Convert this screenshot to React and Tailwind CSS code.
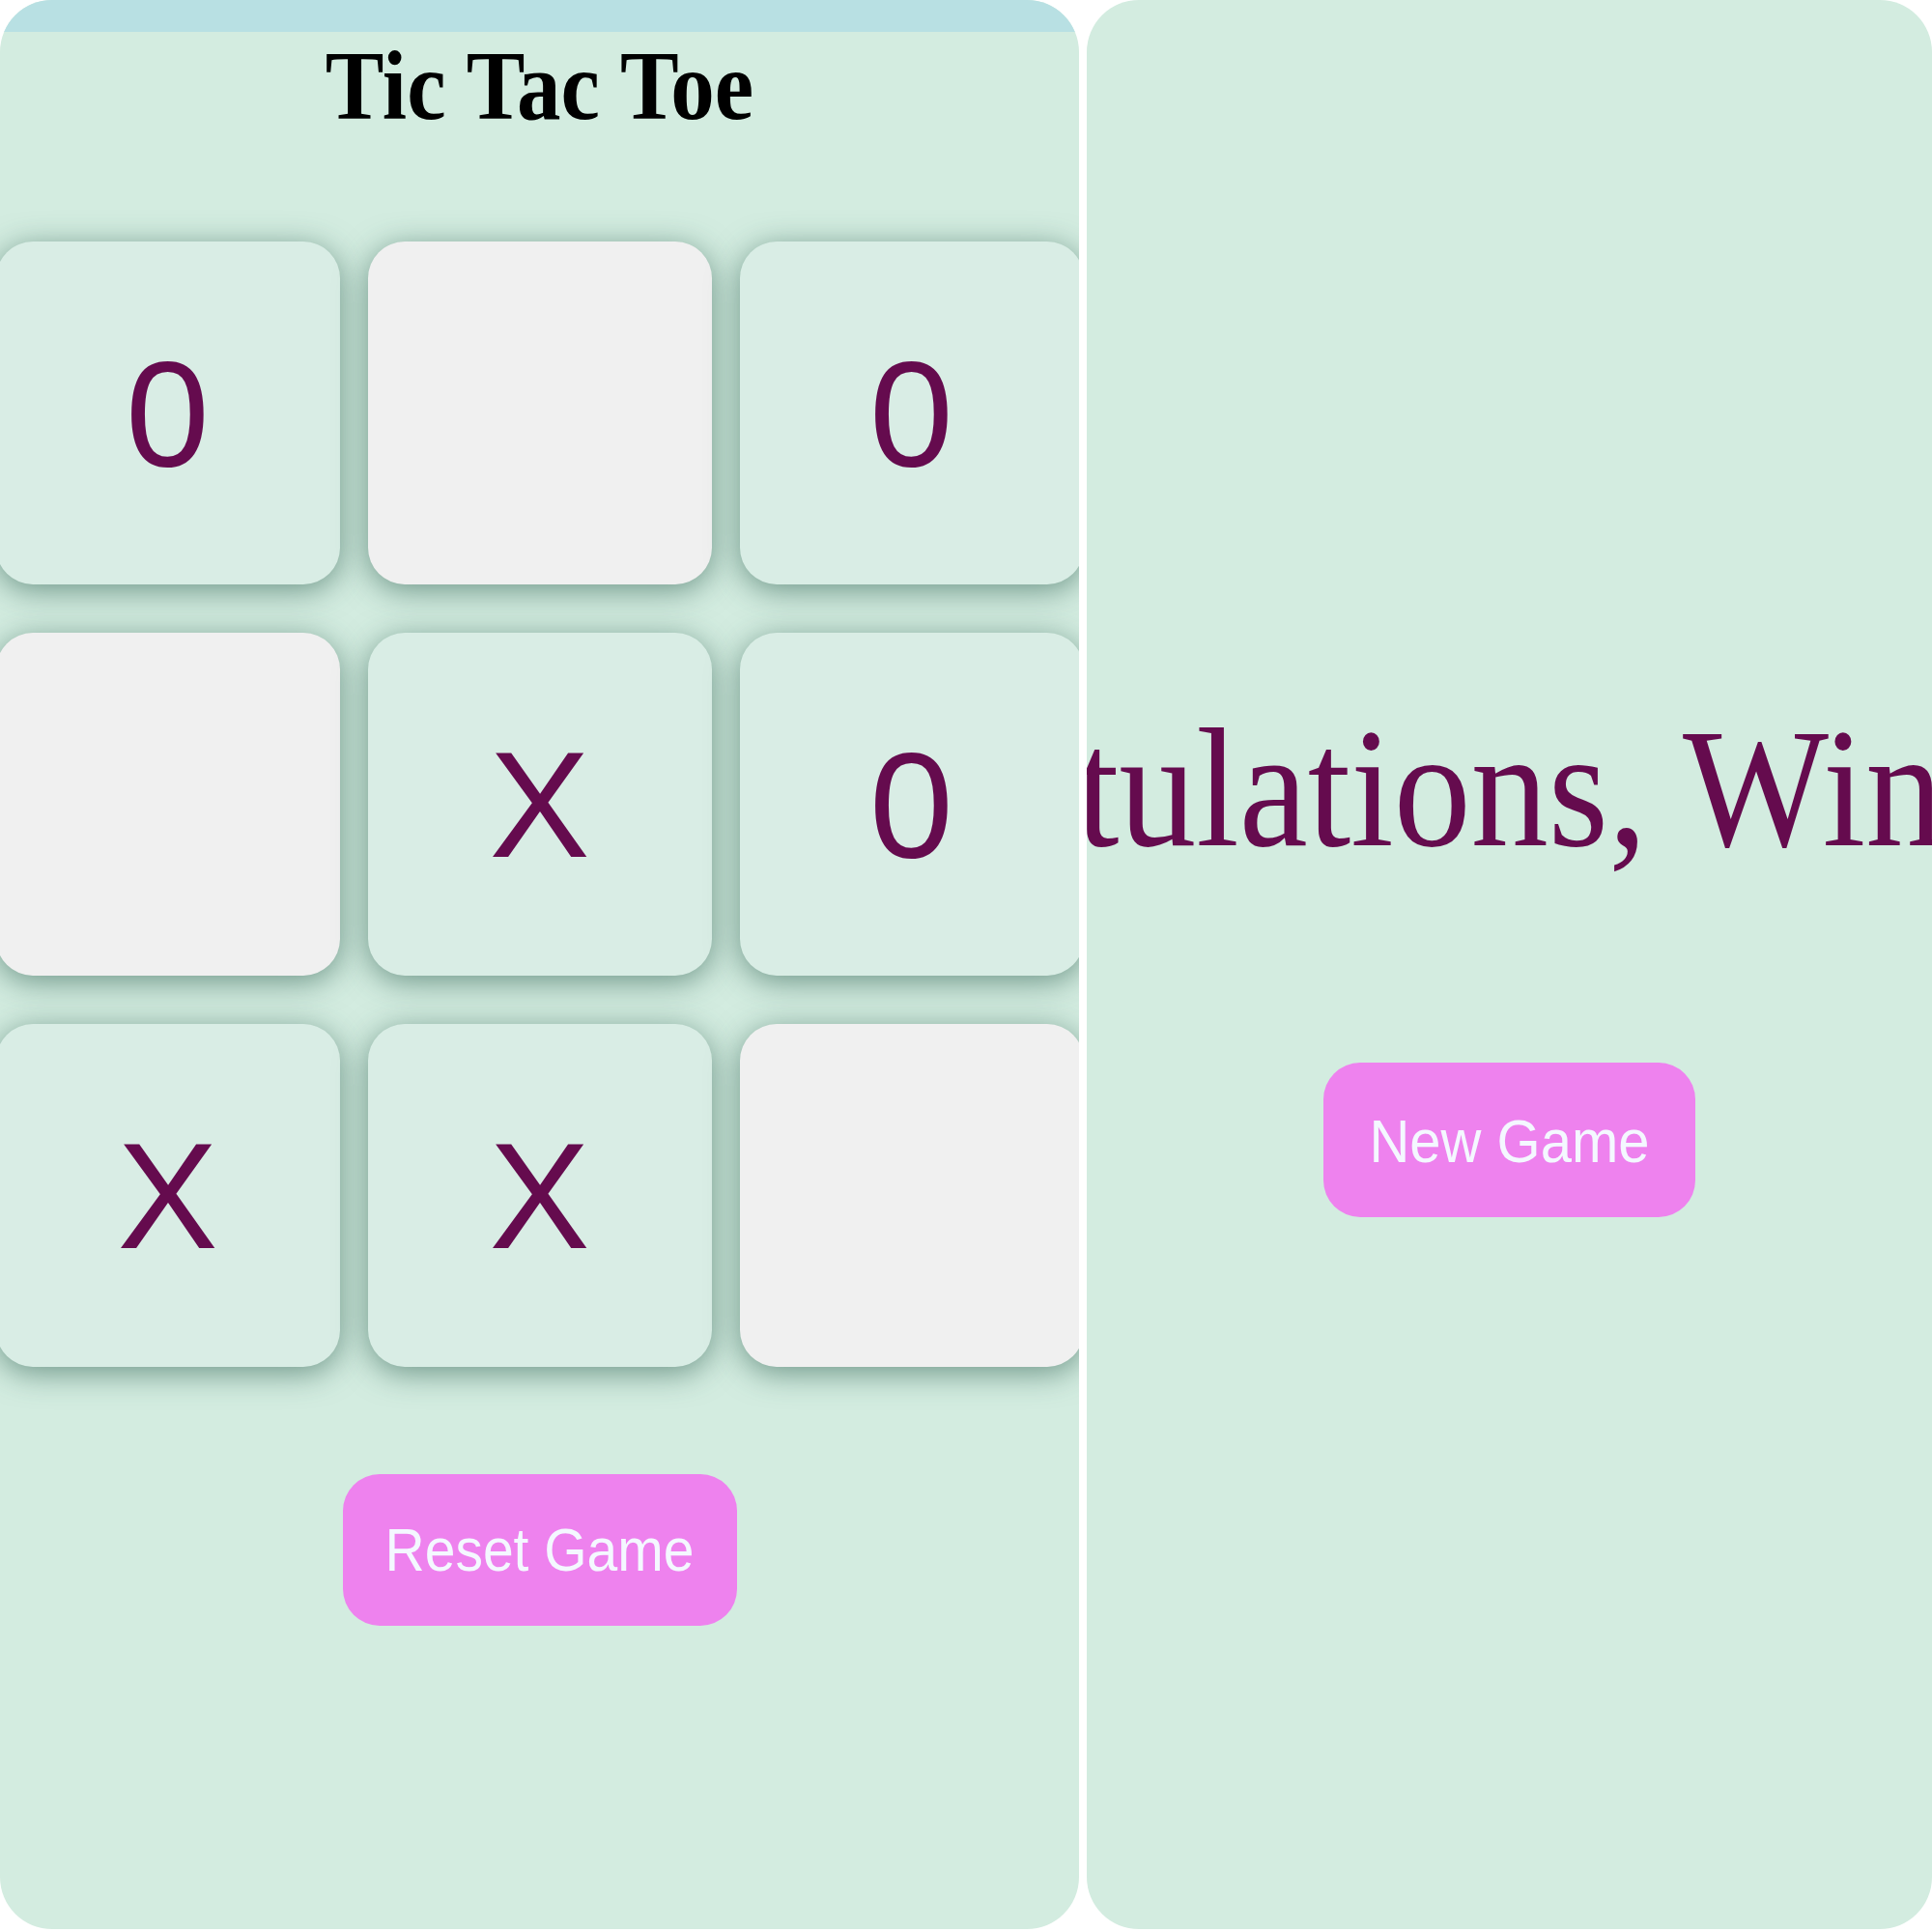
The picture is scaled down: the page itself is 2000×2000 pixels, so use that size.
const board = ["0", "", "0", "", "X", "0", "X", "X", ""];

const Cell = ({ value }) => {
  return (
    <div
      className={`h-[355px] rounded-[38px] flex items-center justify-center text-[156px] leading-none text-[#650b4e] shadow-[0_6px_32px_rgba(40,90,75,0.6)] ${
        value ? "bg-[#d9ede5]" : "bg-[#f0f0f0]"
      }`}
      style={{ fontFamily: '"Liberation Sans", Arial, sans-serif' }}
    >
      {value}
    </div>
  );
};

const App = () => {
  return (
    <div className="w-[2000px] h-[2000px] bg-white flex gap-[8px]">
      <section className="w-[1117px] h-[1997px] shrink-0 rounded-[54px] bg-[#d3ece0] overflow-hidden flex flex-col items-center">
        <div className="h-[33px] self-stretch bg-[#b8e0e3]" />
        <h1
          className="mt-[10px] text-[91px] font-bold leading-none text-black scale-y-[1.12]"
          style={{ fontFamily: '"Liberation Serif", "Times New Roman", serif' }}
        >
          Tic Tac Toe
        </h1>
        <div className="mt-[116px] w-[1126px] shrink-0 grid grid-cols-3 gap-x-[29px] gap-y-[50px]">
          {board.map((v, i) => (
            <Cell key={i} value={v} />
          ))}
        </div>
        <button
          className="mt-[111px] w-[408px] h-[157px] shrink-0 rounded-[38px] bg-[#ee82ee] text-[#f4f8ff] text-[57px] flex items-center justify-center"
          style={{ fontFamily: '"Liberation Sans", Arial, sans-serif' }}
        >
          <span className="scale-y-110">Reset Game</span>
        </button>
      </section>

      <section className="flex-1 h-[1997px] rounded-[54px] bg-[#d3ece0] overflow-hidden flex flex-col items-center">
        <h2
          className="mt-[736px] shrink-0 whitespace-nowrap text-[160px] leading-none text-[#650b4e] scale-y-110"
          style={{ fontFamily: '"Liberation Serif", "Times New Roman", serif' }}
        >
          Congratulations, Winner is 0
        </h2>
        <button
          className="mt-[204px] w-[385px] h-[160px] shrink-0 rounded-[38px] bg-[#ee82ee] text-[#f4f8ff] text-[58px] flex items-center justify-center"
          style={{ fontFamily: '"Liberation Sans", Arial, sans-serif' }}
        >
          <span className="scale-y-110">New Game</span>
        </button>
      </section>
    </div>
  );
};

export default App;
